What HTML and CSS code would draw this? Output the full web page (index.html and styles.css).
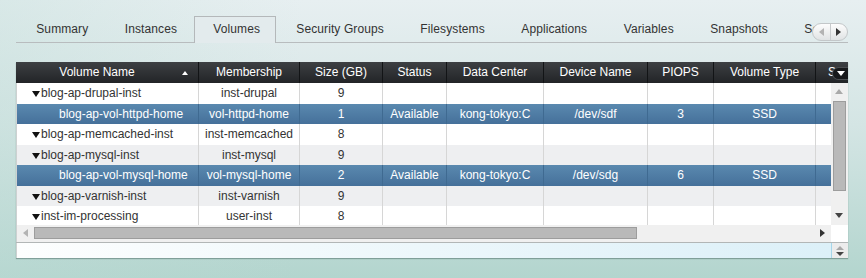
FILE: index.html
```html
<!DOCTYPE html>
<html lang="en">
<head>
  <meta charset="UTF-8" />
  <title>Volumes</title>
  <link rel="stylesheet" href="styles.css">
</head>
<body>

<div class="tabbar">
  <div class="tabs">
    <div class="tab">Summary</div>
    <div class="tab">Instances</div>
    <div class="tab active">Volumes</div>
    <div class="tab">Security Groups</div>
    <div class="tab">Filesystems</div>
    <div class="tab">Applications</div>
    <div class="tab">Variables</div>
    <div class="tab">Snapshots</div>
    <div class="tab">Scripts</div>
  </div>
  <div class="tab-scroll">
    <span class="ts-btn"><i class="tri-left off"></i></span>
    <span class="ts-btn"><i class="tri-right"></i></span>
  </div>
</div>

<div class="grid">
  <div class="grid-head">
    <div class="hcell c1 sorted">Volume Name<i class="sort-up"></i></div>
    <div class="hcell c2">Membership</div>
    <div class="hcell c3">Size (GB)</div>
    <div class="hcell c4">Status</div>
    <div class="hcell c5">Data Center</div>
    <div class="hcell c6">Device Name</div>
    <div class="hcell c7">PIOPS</div>
    <div class="hcell c8">Volume Type</div>
    <div class="hcell c9">S</div>
    <span class="col-menu"><i class="tri-down white"></i></span>
  </div>

  <div class="grid-main">
    <div class="grid-body">
      <div class="row">
        <div class="cell c1 parent"><i class="tri-down"></i>blog-ap-drupal-inst</div>
        <div class="cell c2">inst-drupal</div>
        <div class="cell c3">9</div>
        <div class="cell c4"></div><div class="cell c5"></div><div class="cell c6"></div>
        <div class="cell c7"></div><div class="cell c8"></div><div class="cell c9"></div>
      </div>
      <div class="row sel">
        <div class="cell c1 child">blog-ap-vol-httpd-home</div>
        <div class="cell c2">vol-httpd-home</div>
        <div class="cell c3">1</div>
        <div class="cell c4">Available</div>
        <div class="cell c5">kong-tokyo:C</div>
        <div class="cell c6">/dev/sdf</div>
        <div class="cell c7">3</div>
        <div class="cell c8">SSD</div>
        <div class="cell c9"></div>
      </div>
      <div class="row">
        <div class="cell c1 parent"><i class="tri-down"></i>blog-ap-memcached-inst</div>
        <div class="cell c2">inst-memcached</div>
        <div class="cell c3">8</div>
        <div class="cell c4"></div><div class="cell c5"></div><div class="cell c6"></div>
        <div class="cell c7"></div><div class="cell c8"></div><div class="cell c9"></div>
      </div>
      <div class="row alt">
        <div class="cell c1 parent"><i class="tri-down"></i>blog-ap-mysql-inst</div>
        <div class="cell c2">inst-mysql</div>
        <div class="cell c3">9</div>
        <div class="cell c4"></div><div class="cell c5"></div><div class="cell c6"></div>
        <div class="cell c7"></div><div class="cell c8"></div><div class="cell c9"></div>
      </div>
      <div class="row sel">
        <div class="cell c1 child">blog-ap-vol-mysql-home</div>
        <div class="cell c2">vol-mysql-home</div>
        <div class="cell c3">2</div>
        <div class="cell c4">Available</div>
        <div class="cell c5">kong-tokyo:C</div>
        <div class="cell c6">/dev/sdg</div>
        <div class="cell c7">6</div>
        <div class="cell c8">SSD</div>
        <div class="cell c9"></div>
      </div>
      <div class="row alt">
        <div class="cell c1 parent"><i class="tri-down"></i>blog-ap-varnish-inst</div>
        <div class="cell c2">inst-varnish</div>
        <div class="cell c3">9</div>
        <div class="cell c4"></div><div class="cell c5"></div><div class="cell c6"></div>
        <div class="cell c7"></div><div class="cell c8"></div><div class="cell c9"></div>
      </div>
      <div class="row">
        <div class="cell c1 parent"><i class="tri-down"></i>inst-im-processing</div>
        <div class="cell c2">user-inst</div>
        <div class="cell c3">8</div>
        <div class="cell c4"></div><div class="cell c5"></div><div class="cell c6"></div>
        <div class="cell c7"></div><div class="cell c8"></div><div class="cell c9"></div>
      </div>
    </div>

    <div class="vscroll">
      <i class="tri-up off"></i>
      <div class="vthumb"></div>
      <i class="tri-down dark"></i>
    </div>
  </div>

  <div class="hscroll-row">
    <div class="hscroll">
      <i class="tri-left off"></i>
      <div class="hthumb"></div>
      <i class="tri-right"></i>
    </div>
    <div class="corner"></div>
  </div>

  <div class="grid-foot">
    <div class="foot-field"></div>
    <div class="spinner">
      <i class="tri-up off"></i>
      <i class="tri-down dark"></i>
    </div>
  </div>
</div>

</body>
</html>
```

FILE: styles.css
```css
body {
  margin: 0;
  width: 866px;
  height: 278px;
  overflow: hidden;
  font-family: "Liberation Sans", Arial, sans-serif;
  font-size: 12px;
  color: #333;
  background:
    linear-gradient(to right, rgba(190, 220, 214, 0.35), rgba(255, 255, 255, 0) 35%),
    linear-gradient(to bottom, #e7eff1 0%, #d4e5e4 45%, #b3d5ce 100%);
}

/* triangles */
i { display: block; width: 0; height: 0; font-style: normal; }
.tri-down { border-left: 4px solid transparent; border-right: 4px solid transparent; border-top: 6px solid #111; }
.tri-down.white { border-top-color: #fff; border-top-width: 5px; }
.tri-down.dark { border-top-color: #444; border-top-width: 5px; }
.tri-up { border-left: 4px solid transparent; border-right: 4px solid transparent; border-bottom: 5px solid #444; }
.tri-left { border-top: 4px solid transparent; border-bottom: 4px solid transparent; border-right: 5px solid #444; }
.tri-right { border-top: 4px solid transparent; border-bottom: 4px solid transparent; border-left: 5px solid #333; }
.tri-up.off { border-bottom-color: #a9a9a9; }
.tri-left.off { border-right-color: #b3b3b3; }

/* tabs */
.tabbar { position: relative; margin-left: 16px; width: 832px; padding-top: 16px; }
.tabs { display: flex; height: 27px; padding-left: 2px; overflow: hidden; box-shadow: inset 0 -1px #b8bcbe; }
.tab { flex: none; height: 26px; padding: 0 17.25px; line-height: 25px; letter-spacing: 0.1px; border: 1px solid transparent; border-bottom: 0; white-space: nowrap; }
.tab.active { border-color: #b4b8ba; height: 27px; margin: 0 2px 0 -1px; padding: 0 15px 0 18px; background: #e3ebed; }

.tab-scroll {
  position: absolute; right: 0; top: 23px;
  display: flex; width: 34px; height: 16px;
  border: 1px solid #c3c7c9; border-radius: 9px;
  background: linear-gradient(#fdfdfd, #e0e3e4);
}
.ts-btn { flex: 1; display: flex; align-items: center; justify-content: center; }
.ts-btn + .ts-btn { border-left: 1px solid #c8cbcd; }

/* grid */
.grid { margin: 19px 0 0 16px; width: 832px; background: #fff; box-shadow: 0 1px 1px rgba(60, 90, 85, 0.45); }

.grid-head { position: relative; display: flex; height: 21px; overflow: hidden; background: linear-gradient(#3d4043, #222427); }
.hcell { flex: none; box-sizing: border-box; border-right: 1px solid #121416; line-height: 21px; text-align: center; color: #fff; white-space: nowrap; }
.hcell.sorted { position: relative; padding-right: 20px; }
.sort-up { position: absolute; right: 10px; top: 9px; border-left: 3px solid transparent; border-right: 3px solid transparent; border-bottom: 4px solid #fff; }
.hcell.c9 { width: 32px; text-align: left; padding-left: 12px; border-right: 0; }
.col-menu {
  position: absolute; right: 0; top: 6px;
  display: flex; align-items: center; justify-content: center;
  width: 15px; height: 11px;
  border-radius: 6px 0 0 6px;
  background: #17191b; box-shadow: 0 0 0 1px #4a4d50;
}

.c1 { width: 183px; }
.c2 { width: 101px; }
.c3 { width: 83px; }
.c4 { width: 64px; }
.c5 { width: 97px; }
.c6 { width: 104px; }
.c7 { width: 66px; }
.c8 { width: 102px; }
.c9 { width: 100px; }

.grid-main { display: flex; height: 142px; }
.grid-body { width: 814px; overflow: hidden; border-left: 1px solid #cdd1d1; }
.row { display: flex; height: 20.5px; }
.row.alt { background: #eeeff1; }
.row.sel { background: linear-gradient(#5a89af, #45709a); color: #fff; }
.cell { flex: none; box-sizing: border-box; border-right: 1px solid #d6d6d6; line-height: 20px; text-align: center; white-space: nowrap; overflow: hidden; }
.row .c1 { width: 182px; }
.row.sel .cell { border-right-color: #3f6a91; }
.cell.c9 { border-right: 0; }
.cell.parent { display: flex; align-items: center; padding-left: 15px; text-align: left; }
.cell.parent .tri-down { margin: 2px 1px 0 0; }
.cell.child { padding-left: 42px; text-align: left; }

.vscroll { position: relative; width: 17px; background: #f0f0f0; }
.vscroll .tri-up { position: absolute; left: 4px; top: 6px; }
.vscroll .tri-down { position: absolute; left: 4px; top: 130px; }
.vthumb { position: absolute; left: 2px; top: 18px; width: 11px; height: 88px; background: #b9b9b9; border: 1px solid #9d9d9d; }

.hscroll-row { display: flex; height: 17px; border-bottom: 1px solid #b2b6b6; }
.hscroll { position: relative; width: 814px; background: #f0f0f0; border-left: 1px solid #cdd1d1; }
.hscroll .tri-left { position: absolute; left: 6px; top: 4px; }
.hscroll .tri-right { position: absolute; left: 803px; top: 4px; }
.hthumb { position: absolute; left: 17px; top: 2px; width: 601px; height: 10px; background: #b9b9b9; border: 1px solid #9d9d9d; }
.corner { width: 17px; background: #fff; }

.grid-foot { display: flex; height: 15px; }
.foot-field { width: 814px; border-left: 1px solid #cdd1d1; border-right: 1px solid #a6d6ea; background: linear-gradient(to right, #fdfefe, #dcf0f8); }
.spinner { flex: 1; display: flex; flex-direction: column; align-items: center; justify-content: center; gap: 2px; background: #ececec; }
.spinner .tri-up { border-bottom-width: 4px; }
.spinner .tri-down { border-top-width: 4px; }
```
